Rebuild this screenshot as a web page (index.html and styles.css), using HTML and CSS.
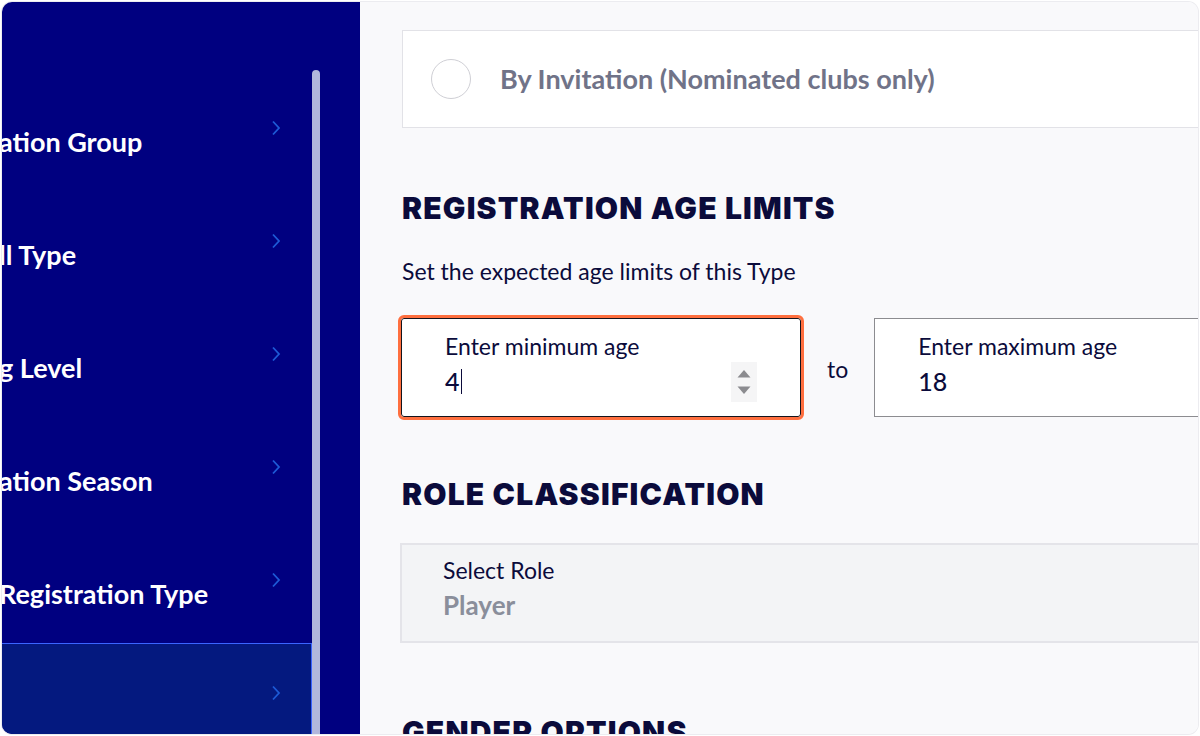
FILE: index.html
```html
<!DOCTYPE html>
<html lang="en">
<head>
<meta charset="utf-8">
<title>Registration Type</title>
<link rel="stylesheet" href="styles.css">
</head>
<body>
<div class="window">
  <aside class="sidebar">
    <nav class="nav">
      <a class="nav-item"><span class="nav-label">ation Group</span><svg class="chev" viewBox="0 0 10 16"><path d="M2 1.5 L8 8 L2 14.5"/></svg></a>
      <a class="nav-item"><span class="nav-label">ll Type</span><svg class="chev" viewBox="0 0 10 16"><path d="M2 1.5 L8 8 L2 14.5"/></svg></a>
      <a class="nav-item"><span class="nav-label">g Level</span><svg class="chev" viewBox="0 0 10 16"><path d="M2 1.5 L8 8 L2 14.5"/></svg></a>
      <a class="nav-item"><span class="nav-label">ation Season</span><svg class="chev" viewBox="0 0 10 16"><path d="M2 1.5 L8 8 L2 14.5"/></svg></a>
      <a class="nav-item"><span class="nav-label">Registration Type</span><svg class="chev" viewBox="0 0 10 16"><path d="M2 1.5 L8 8 L2 14.5"/></svg></a>
      <a class="nav-item active"><span class="nav-label"></span><svg class="chev" viewBox="0 0 10 16"><path d="M2 1.5 L8 8 L2 14.5"/></svg></a>
    </nav>
    <div class="scrollbar"><div class="thumb"></div></div>
  </aside>
  <main class="main">
    <div class="content">
      <div class="radio-card">
        <span class="radio"></span>
        <span class="radio-text">By Invitation (Nominated clubs only)</span>
      </div>

      <h2 class="section-title first">REGISTRATION AGE LIMITS</h2>
      <p class="hint">Set the expected age limits of this Type</p>

      <div class="age-row">
        <div class="field focused">
          <span class="field-label">Enter minimum age</span>
          <span class="field-value">4<span class="caret"></span></span>
          <span class="spinner">
            <svg viewBox="0 0 26 40"><path d="M13 8 L19.5 15.5 L6.5 15.5 Z"/><path d="M6.5 24.5 L19.5 24.5 L13 32 Z"/></svg>
          </span>
        </div>
        <span class="to">to</span>
        <div class="field">
          <span class="field-label">Enter maximum age</span>
          <span class="field-value">18</span>
        </div>
      </div>

      <h2 class="section-title role">ROLE CLASSIFICATION</h2>
      <div class="select">
        <span class="field-label">Select Role</span>
        <span class="select-value">Player</span>
      </div>

      <h2 class="section-title gender">GENDER OPTIONS</h2>
    </div>
  </main>
</div>
</body>
</html>
```
FILE: styles.css
```css
* { box-sizing: border-box; }

html, body {
  margin: 0;
  padding: 0;
  background: #ffffff;
  font-family: Lato, "Noto Sans", sans-serif;
}

.window {
  margin: 2px;
  width: 1196px;
  height: 732px;
  display: flex;
  border-radius: 10px;
  overflow: hidden;
  box-shadow: 0 0 0 1px #ececf0;
}

/* Sidebar */
.sidebar {
  flex: none;
  width: 358px;
  background: #000080;
  display: flex;
  overflow: hidden;
}

.nav {
  flex: none;
  width: 310px;
  padding-top: 76px;
  display: flex;
  flex-direction: column;
}

.nav-item {
  flex: none;
  height: 113px;
  display: flex;
  align-items: center;
  justify-content: space-between;
  padding: 0 31px 0 0;
  color: #ffffff;
  text-decoration: none;
}

.nav-label {
  margin-left: -3px;
  margin-top: 13px;
  font-size: 27px;
  font-weight: 700;
  white-space: nowrap;
}

.chev {
  width: 10px;
  height: 16px;
  margin-bottom: 14px;
  fill: none;
  stroke: #1d5ad6;
  stroke-width: 1.8;
}

.nav-item.active {
  background: #04197f;
  border-top: 1px solid #3a64ff;
  border-right: 1px solid #3a64ff;
  padding-right: 30px;
}

.scrollbar {
  flex: none;
  width: 8px;
  padding-top: 68px;
}

.thumb {
  height: 100%;
  background: #b1b7dc;
  border-radius: 4px 4px 0 0;
}

/* Main */
.main {
  flex: 1;
  background: #f9f9fb;
  overflow: hidden;
  padding: 28px 0 0 42px;
}

.content {
  width: 900px;
}

.radio-card {
  height: 98px;
  background: #ffffff;
  border: 1px solid #e2e2e7;
  display: flex;
  align-items: center;
  padding-left: 28px;
  gap: 29px;
}

.radio {
  flex: none;
  width: 40px;
  height: 40px;
  border-radius: 50%;
  border: 1px solid #cfcfd5;
  background: #fff;
}

.radio-text {
  font-size: 27px;
  font-weight: 700;
  color: #707388;
  margin-top: -1px;
}

.section-title {
  margin: 0;
  font-family: Inter, Lato, sans-serif;
  font-size: 30px;
  line-height: 36px;
  font-weight: 900;
  color: #0b0b3b;
  letter-spacing: 1.2px;
}

.section-title.first { margin-top: 62px; }
.section-title.role { margin-top: 59px; }
.section-title.gender { margin-top: 71px; }

.hint {
  margin: 31px 0 0;
  font-size: 23px;
  line-height: 28px;
  color: #0b0b3b;
}

.age-row {
  margin-top: 33px;
  display: flex;
  align-items: center;
  gap: 26px;
}

.field {
  position: relative;
  flex: none;
  width: 400px;
  height: 99px;
  background: #ffffff;
  border: 1px solid #8c8c90;
  padding: 14px 0 0 43px;
  display: flex;
  flex-direction: column;
}

.field.focused {
  border-color: #14141c;
  border-radius: 3px;
  outline: 3px solid #ff6f3f;
  outline-offset: 0;
  margin-left: -1px;
}

.field-label {
  font-size: 23px;
  line-height: 26px;
  color: #0b0b3b;
}

.field-value {
  margin-top: 8px;
  font-size: 25px;
  line-height: 28px;
  font-weight: 500;
  color: #0b0b3b;
  display: flex;
  align-items: center;
}

.caret {
  display: inline-block;
  width: 1px;
  height: 25px;
  background: #0b0b3b;
  margin-left: 1px;
}

.spinner {
  position: absolute;
  right: 43px;
  top: 43px;
  width: 26px;
  height: 40px;
  background: #f5f5f6;
}

.spinner svg {
  display: block;
  width: 26px;
  height: 40px;
  fill: #8b8b8f;
}

.to {
  font-size: 23px;
  color: #0b0b3b;
  margin-top: 2px;
}

.select {
  margin-top: 31px;
  height: 100px;
  background: #f3f4f6;
  border: 2px solid #e4e4e9;
  padding: 12px 0 0 41px;
  display: flex;
  flex-direction: column;
  margin-left: -2px;
}

.select-value {
  margin-top: 7px;
  font-size: 26px;
  line-height: 30px;
  font-weight: 700;
  color: #8a8e9b;
}
```
